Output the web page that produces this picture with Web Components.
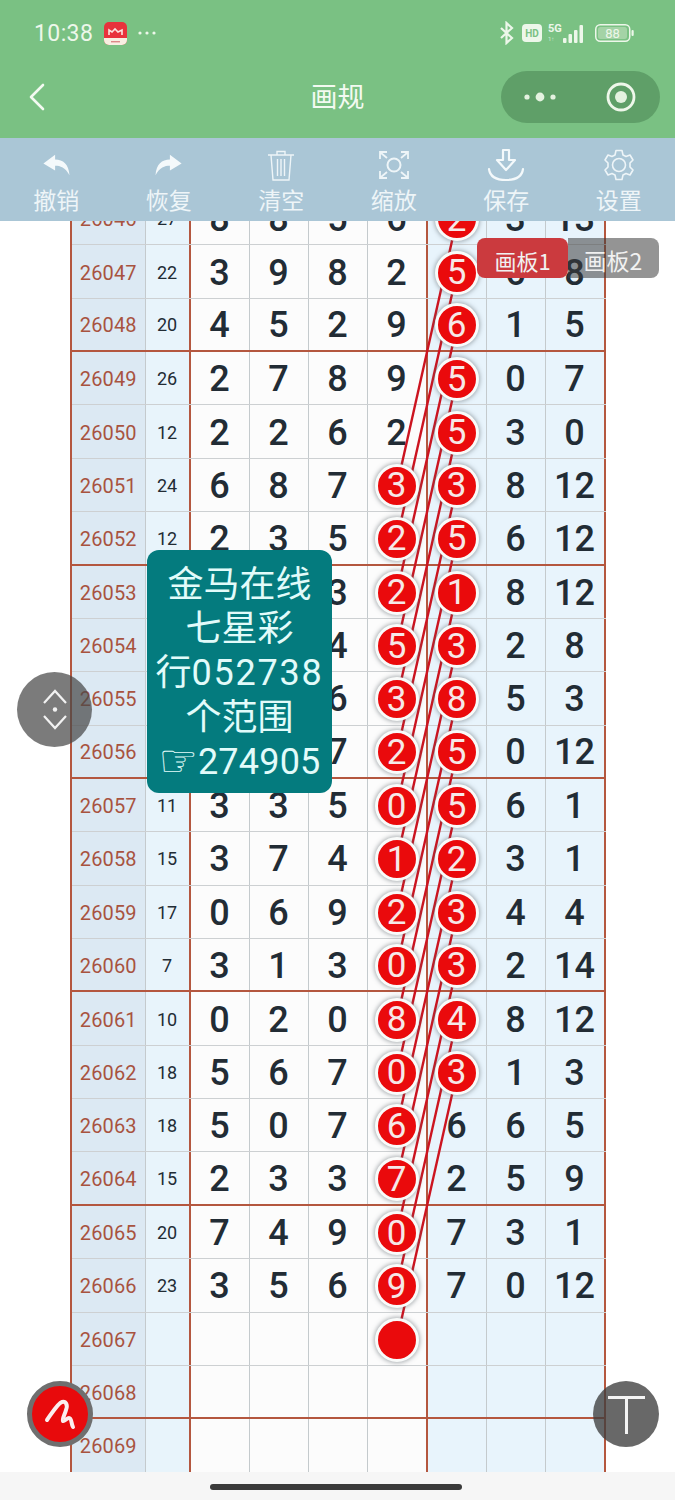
<!DOCTYPE html>
<html lang="zh"><head><meta charset="utf-8"><title>画规</title>
<style>
html,body{margin:0;padding:0;background:#fff}
body{font-family:"Noto Sans CJK SC","Noto Sans",sans-serif}
</style></head><body>
<app-shell>
  <app-header></app-header>
  <tool-bar>
    <tool-item label="撤销" icon="undo"></tool-item>
    <tool-item label="恢复" icon="redo"></tool-item>
    <tool-item label="清空" icon="trash"></tool-item>
    <tool-item label="缩放" icon="zoom"></tool-item>
    <tool-item label="保存" icon="save"></tool-item>
    <tool-item label="设置" icon="gear"></tool-item>
  </tool-bar>
  <lotto-chart></lotto-chart>
  <home-bar></home-bar>
  <board-tabs></board-tabs>
  <note-box>
    <div>金马在线</div><div>七星彩</div><div>行<span style="letter-spacing:1.8px">052738</span></div><div>个范围</div><div><span style="font-family:'DejaVu Sans';font-size:44px;line-height:0;vertical-align:-2px">☞</span><span style="letter-spacing:.2px">274905</span></div>
  </note-box>
  <float-button kind="scroll"></float-button>
  <float-button kind="pen"></float-button>
  <float-button kind="top"></float-button>
</app-shell>
<script>
const def=(n,html,extra={})=>{customElements.define(n,class extends HTMLElement{
  constructor(){super();this.attachShadow({mode:'open'})}
  connectedCallback(){
    this.shadowRoot.innerHTML=typeof html==='function'?html(this):html;
    if(extra.init)extra.init(this)}
})};

def('app-shell',`<style>:host{display:flex;flex-direction:column;position:relative;width:675px;height:1500px;overflow:hidden;background:#fff}</style><slot></slot>`);

def('app-header',`<style>
:host{display:flex;flex-direction:column;height:138px;flex:none;background:#7ac183;color:#edf7ea;font-family:"Noto Sans CJK SC",sans-serif}
.status{height:66px;display:flex;align-items:center;padding:0 41px 0 34px;box-sizing:border-box}
.time{font:400 23px/1 Roboto,sans-serif;letter-spacing:.4px;margin-right:11px}
.app{width:23px;height:23px;display:block;margin-right:10px}
.dots{width:20px;height:4px;display:block}
.sp{flex:1}
.right{display:flex;align-items:center;gap:7px}
.nav{height:72px;display:flex;align-items:center;position:relative;padding:0 15px 10px 28px;box-sizing:border-box;justify-content:space-between}
.title{position:absolute;left:0;right:0;top:11px;text-align:center;font-size:27px;line-height:38px;color:#f3faf1}
.cap{width:159px;height:52px;border-radius:26px;background:#5f9f68;display:flex;align-items:center;justify-content:space-between;padding:0 24px 0 22px;box-sizing:border-box}
</style>
<div class="status">
  <span class="time">10:38</span>
  <svg class="app" viewBox="0 0 23 23"><rect width="23" height="23" rx="5" fill="#e8323c"/><path d="M0 16h23v2a5 5 0 0 1-5 5H5a5 5 0 0 1-5-5z" fill="#f8efe2"/><path d="M5 13V8l3 2 3-3 3 3 4-2v5" fill="none" stroke="#fbe3df" stroke-width="1.6"/><rect x="7" y="19" width="9" height="1.4" fill="#d88"/></svg>
  <svg class="dots" viewBox="0 0 20 4" fill="#edf7ea"><circle cx="3" cy="2" r="1.6"/><circle cx="10" cy="2" r="1.6"/><circle cx="17" cy="2" r="1.6"/></svg>
  <span class="sp"></span>
  <div class="right">
    <svg width="16" height="24" viewBox="0 0 16 24" fill="none" stroke="#edf7ea" stroke-width="2.2"><path d="M2 7l11 10-5.5 5V2L13 7 2 17"/></svg>
    <svg width="20" height="18" viewBox="0 0 20 18"><rect width="20" height="18" rx="4" fill="#edf7ea"/><text x="10" y="13" text-anchor="middle" font-family="Roboto" font-weight="700" font-size="10" fill="#7ac183">HD</text></svg>
    <svg width="40" height="24" viewBox="0 0 40 24" style="margin-left:-1px"><text x="0" y="11" font-family="Roboto" font-weight="700" font-size="11" fill="#edf7ea">5G</text><text x="0" y="20" font-family="Roboto" font-size="6" fill="#cfe8cf">1↑</text><g fill="#edf7ea"><rect x="15" y="17" width="3.5" height="5" rx="1"/><rect x="20.5" y="13" width="3.5" height="9" rx="1"/><rect x="26" y="9" width="3.5" height="13" rx="1"/><rect x="31.5" y="4" width="3.5" height="18" rx="1"/></g></svg>
    <svg width="39" height="18" viewBox="0 0 39 18"><rect x=".75" y=".75" width="34" height="16.5" rx="4.5" fill="none" stroke="#edf7ea" stroke-width="1.5"/><rect x="3" y="3" width="29" height="12" rx="2.5" fill="#a4d3a6"/><rect x="36.5" y="6" width="2.2" height="6" rx="1" fill="#edf7ea"/><text x="17.5" y="14" text-anchor="middle" font-family="Roboto" font-size="13" fill="#edf7ea">88</text></svg>
  </div>
</div>
<div class="nav">
  <svg width="18" height="28" viewBox="0 0 18 28" fill="none" stroke="#f3faf1" stroke-width="2.6" stroke-linecap="round" stroke-linejoin="round"><path d="M15 2L3 14l12 12"/></svg>
  <div class="title">画规</div>
  <div class="cap">
    <svg width="34" height="10" viewBox="0 0 34 10" fill="#e4f2e0"><circle cx="4" cy="5" r="2.6"/><circle cx="17" cy="5" r="4.4"/><circle cx="30" cy="5" r="2.6"/></svg>
    <svg width="30" height="30" viewBox="0 0 30 30"><circle cx="15" cy="15" r="13" fill="none" stroke="#eef7ea" stroke-width="2.8"/><circle cx="15" cy="15" r="6" fill="#e4f2e0"/></svg>
  </div>
</div>`);

def('tool-bar',`<style>:host{display:grid;grid-template-columns:repeat(6,1fr);height:83px;flex:none;background:#aac6d6;position:relative;z-index:5}</style><slot></slot>`);

const icons={
 undo:`<path transform="translate(16 16) scale(.9 .78) translate(-16 -16)" d="M15 3L2 14l13 9v-6c6 0 11 2 16 12C30 15 24 9 15 9z" fill="#f4f9fb"/>`,
 redo:`<path transform="translate(16 16) scale(.9 .78) translate(-16 -16)" d="M17 3l13 11-13 9v-6c-6 0-11 2-16 12C2 15 8 9 17 9z" fill="#f4f9fb"/>`,
 trash:`<g fill="none" stroke="#eef5f8" stroke-width="1.4"><path d="M3 6h26M12 6V2.5h8V6M6 6l2 25h16l2-25M12.5 10v17M16 10v17M19.5 10v17"/></g>`,
 zoom:`<g fill="none" stroke="#eef5f8" stroke-width="2"><circle cx="16" cy="16" r="6.5"/><path d="M2 10V3h7M30 10V3h-7M2 22v7h7M30 22v7h-7M3 4l6 5M29 4l-6 5M3 28l6-5M29 28l-6-5" stroke-width="1.8"/></g>`,
 save:`<g fill="none" stroke="#f4f9fb" stroke-width="2.2" stroke-linecap="round" stroke-linejoin="round"><path d="M13 1h6v10h6l-9 10-9-10h6z"/><path d="M-1 20c1 8 8 11 17 11s16-3 17-11"/></g>`,
 gear:`<g fill="none" stroke="#eef5f8" stroke-width="1.6" stroke-linejoin="round"><circle cx="16" cy="16" r="6.5"/><path d="M13 1.5h6l1 4.5 3 1.5 4-1.5 3 5-3 3v4l3 3-3 5-4-1.5-3 1.5-1 4.5h-6l-1-4.5-3-1.5-4 1.5-3-5 3-3v-4l-3-3 3-5 4 1.5 3-1.5z"/></g>`};
def('tool-item',el=>`<style>:host{display:flex;flex-direction:column;align-items:center;color:#eef5f8;font:400 23px/30px "Noto Sans CJK SC",sans-serif;padding-top:11px;box-sizing:border-box}
svg{width:32px;height:32px;display:block;margin-bottom:3px;overflow:visible}</style>
<svg viewBox="0 0 32 32">${icons[el.getAttribute('icon')]||''}</svg><span>${el.getAttribute('label')}</span>`);

const data=[
 [26046,27,8,8,5,6,'(2',3,13],[26047,22,3,9,8,2,'(5',6,8],[26048,20,4,5,2,9,'(6',1,5],
 [26049,26,2,7,8,9,'(5',0,7],[26050,12,2,2,6,2,'(5',3,0],[26051,24,6,8,7,'(3','(3',8,12],
 [26052,12,2,3,5,'(2','(5',6,12],[26053,'','','',3,'(2','(1',8,12],[26054,'','','',4,'(5','(3',2,8],
 [26055,'','','',6,'(3','(8',5,3],[26056,'','','',7,'(2','(5',0,12],[26057,11,3,3,5,'(0','(5',6,1],
 [26058,15,3,7,4,'(1','(2',3,1],[26059,17,0,6,9,'(2','(3',4,4],[26060,7,3,1,3,'(0','(3',2,14],
 [26061,10,0,2,0,'(8','(4',8,12],[26062,18,5,6,7,'(0','(3',1,3],[26063,18,5,0,7,'(6',6,6,5],
 [26064,15,2,3,3,'(7',2,5,9],[26065,20,7,4,9,'(0',7,3,1],[26066,23,3,5,6,'(9',7,0,12],
 [26067,'','','','','(','','',''],[26068,'','','','','','','',''],[26069,'','','','','','','','']
];
def('chart-row',el=>{
 const v=(el.getAttribute('cells')||'').split('|');
 const cell=(x,i)=>{const c=i===0?'id':i===1?'sum':i<6?'w':'b';const last=(i===1||i===5||i===8)?' end':'';
   let inner=x; if(String(x).startsWith('(')) inner=`<span class="ball">${x.slice(1)}</span>`;
   return `<div class="c ${c}${last}">${inner}</div>`};
 return `<style>
:host{display:block;height:53.36px}
.r{display:grid;grid-template-columns:73.5px 45px 59px 59px 59px 60px 59px 59px 60px;height:100%;box-sizing:border-box;border-bottom:1.5px solid #cdd0d2}
:host([thick]) .r{border-bottom:2.5px solid #b4573f}
.c{display:flex;align-items:center;justify-content:center;box-sizing:border-box;border-right:1.5px solid #c4cacd;font:500 36px/1 Roboto,sans-serif;color:#222c35;min-width:0;padding-top:2px}
.id{background:#dce9f3;font:400 20px/1 Roboto,sans-serif;color:#a8533f;letter-spacing:.15px}
.sum{background:#e8f4fb;font:400 18px/1 Roboto,sans-serif;color:#222c35}
.w{background:#fcfcfc}.b{background:#e8f4fc}
.end{border-right:2.5px solid #b4573f}
.ball{position:relative;z-index:2;flex:none;display:flex;align-items:center;justify-content:center;width:38px;height:38px;border-radius:50%;background:#ea0a0c;border:3.5px solid #f9fbfa;box-shadow:0 0 4px 1px rgba(90,100,105,.5);color:#f6e8e8;font:400 35px/1 Roboto,sans-serif}
</style><div class="r">${v.map(cell).join('')}</div>`});

const rowY=i=>26.68+53.36*i;
const lines=[];
for(let k=0;k<=16;k++)lines.push(`<line x1="387" y1="${rowY(k)}" x2="327" y2="${rowY(k+5)}"/>`);
def('lotto-chart',`<style>
:host{display:block;flex:1;min-height:0;overflow:hidden;background:#fff}
.t{position:relative;width:536px;margin:-29px 0 0 70px;border-left:2.5px solid #b4573f;box-sizing:border-box}
svg{position:absolute;left:-2.5px;top:0;z-index:1;pointer-events:none}
</style><div class="t"><slot></slot>
<svg width="536" height="1281" viewBox="0 0 536 1281" fill="none" stroke="#cc1420" stroke-width="2.4">${lines.join('')}</svg></div>`,{init(el){
  if(el.children.length)return;
  data.forEach(d=>{const r=document.createElement('chart-row');r.setAttribute('cells',d.join('|'));if(((d[0]-26049)%4+4)%4===3)r.setAttribute('thick','');el.appendChild(r)});
}});

def('home-bar',`<style>:host{display:flex;height:28px;flex:none;background:#f6f6f6;justify-content:center;align-items:flex-start;padding-top:12px;box-sizing:border-box;position:relative;z-index:3}
i{display:block;width:252px;height:6px;border-radius:3px;background:#3a3a3a;margin-right:3px}</style><i></i>`);

def('board-tabs',`<style>:host{position:absolute;left:477px;top:238px;display:flex;z-index:6;font:400 22px/44px "Noto Sans CJK SC",sans-serif;color:#f1f1f1}
div{width:91px;height:40px;text-align:center;box-sizing:border-box}
.a{background:#cb3a3e;border-radius:8px;position:relative;z-index:1}
.b{background:rgba(60,60,60,.55);border-radius:0 8px 8px 0;font-size:23px;padding-right:1px}</style>
<div class="a">画板1</div><div class="b">画板2</div>`);

def('note-box',`<style>:host{position:absolute;left:147px;top:550px;width:185px;height:243px;box-sizing:border-box;padding:13px 0 0;z-index:6;background:#047b7e;border-radius:12px;color:#e2fbfa;font:400 36px/44.2px Roboto,"Noto Sans CJK SC",sans-serif;text-align:center;white-space:nowrap}</style><slot></slot>`);

def('float-button',el=>{
 const k=el.getAttribute('kind');
 if(k==='scroll')return `<style>:host{position:absolute;left:17px;top:672px;width:75px;height:75px;border-radius:50%;background:rgba(72,72,72,.72);z-index:7;display:block}svg{display:block}</style>
 <svg width="75" height="75" viewBox="0 0 75 75" fill="none" stroke="#f2f2f2" stroke-width="2.2"><path d="M27 31l11-12 11 12M27 44l11 12 11-12"/><circle cx="38" cy="37.5" r="2.2" fill="#f2f2f2" stroke="none"/></svg>`;
 if(k==='pen')return `<style>:host{position:absolute;left:27px;top:1381px;width:66px;height:66px;border-radius:50%;background:#e80a0c;border:5px solid #6f6f6f;box-sizing:border-box;z-index:7;display:block}svg{display:block}</style>
 <svg width="56" height="56" viewBox="0 0 56 56" fill="none" stroke="#fbeeee" stroke-width="4" stroke-linecap="round" stroke-linejoin="round"><path d="M15 34C20 27 26 17 30 16c4-1 6 3 4 8-1 4-4 9-3 11 1 1 4-3 6-3 3 0 2 6 4 9"/></svg>`;
 return `<style>:host{position:absolute;left:593px;top:1381px;width:66px;height:66px;border-radius:50%;background:rgba(62,62,62,.78);z-index:7;display:block}svg{display:block}</style>
 <svg width="66" height="66" viewBox="0 0 66 66" fill="none" stroke="#f4f4f4" stroke-width="3"><path d="M15 16.5h37M33.5 16.5V53"/></svg>`;
});
</script>
</body></html>
